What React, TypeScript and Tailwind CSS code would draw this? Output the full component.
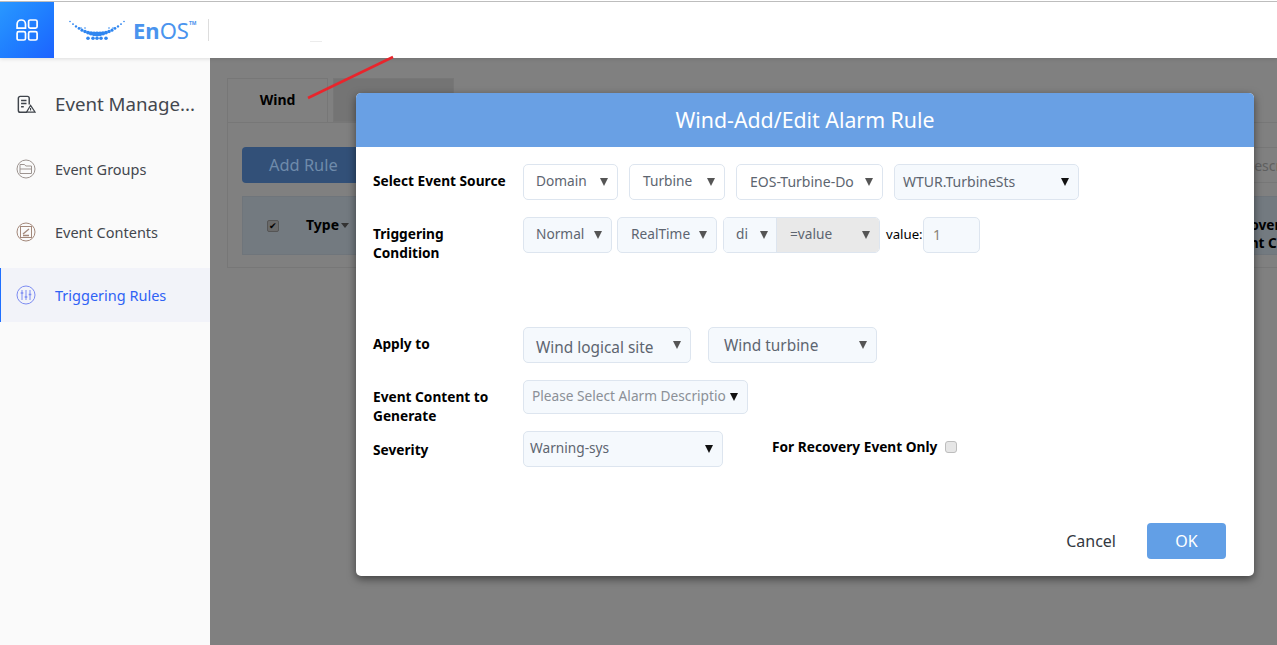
import type { ReactNode } from 'react'

const font = "font-['Noto_Sans',sans-serif]"

function Caret({ dark }: { dark?: boolean }) {
  return (
    <svg width="8" height="8" viewBox="0 0 8 8" className="shrink-0">
      <path d="M0 0h8L4 8z" fill={dark ? '#111' : '#555'} />
    </svg>
  )
}

type SelectProps = {
  label: string
  className: string
  textClass?: string
  dark?: boolean
}

function FakeSelect({ label, className, textClass = 'pb-[2px]', dark }: SelectProps) {
  return (
    <div className={`flex items-center justify-between rounded-[5px] border border-[#dde5ef] pr-[9px] ${className}`}>
      <span className={`whitespace-nowrap ${textClass}`}>{label}</span>
      <Caret dark={dark} />
    </div>
  )
}

function FieldRow({ label, className, children }: { label: ReactNode; className: string; children: ReactNode }) {
  return (
    <div className={`flex ${className}`}>
      <div className="w-[150px] shrink-0 text-[13.7px] font-bold leading-[19px] text-black">{label}</div>
      {children}
    </div>
  )
}

function LogoDots() {
  const main = Array.from({ length: 19 }, (_, i) => {
    const t = i / 18
    const d = Math.abs(t - 0.5) * 2
    return { x: 1 + t * 54, y: 1.5 + 12.5 * (1 - d * d), r: 0.8 + (1 - d) * 1.7 }
  })
  const lower = [19, 24, 28, 32, 37].map((x) => ({ x, y: 18.2, r: 1.8 }))
  const upper = [12, 16, 40, 44].map((x) => ({ x, y: 8, r: 0.8 }))
  return (
    <svg width="56" height="21" viewBox="0 0 56 21">
      <g fill="#2f86f0">
        {[...main, ...lower, ...upper].map((dot, i) => (
          <circle key={i} cx={dot.x} cy={dot.y} r={dot.r} />
        ))}
      </g>
    </svg>
  )
}

function SideItem({ icon, label, active }: { icon: ReactNode; label: string; active?: boolean }) {
  return (
    <div
      className={`flex h-[54px] items-center border-l pl-[15px] text-[14.5px] ${
        active ? 'border-[#1f6fff] bg-[#f2f3f9] text-[#2f62f5]' : 'border-transparent text-[#43474e]'
      }`}
    >
      <span className="mr-[19px] flex w-[20px] justify-center">{icon}</span>
      <span className="pt-[2px]">{label}</span>
    </div>
  )
}

export default function App() {
  return (
    <div className={`relative h-[645px] w-[1277px] overflow-hidden bg-[#808080] ${font}`}>
      {/* top bar */}
      <header className="relative z-10 h-[58px] bg-white shadow-[0_1px_4px_rgba(0,0,0,0.12)]">
        <div className="h-px" />
        <div className="h-px bg-[#bdbdbd]" />
        <div className="flex h-[56px] items-stretch">
          <div className="flex w-[54px] items-center justify-center bg-gradient-to-br from-[#2a98ff] to-[#1e62ff]">
            <svg width="22" height="22" viewBox="0 0 22 22" fill="none" stroke="#fff" strokeWidth="1.7">
              <path d="M5.3 1c2.4 0 4.2 1.8 4.2 4.2v3.9H1.1V5.2C1.1 2.8 2.9 1 5.3 1z" />
              <rect x="12.6" y="1" width="8.5" height="8.1" rx="1.6" />
              <rect x="1.1" y="12.6" width="8.4" height="8.4" rx="1.6" />
              <rect x="12.6" y="12.6" width="8.5" height="8.4" rx="1.6" />
            </svg>
          </div>
          <div className="ml-[15px] flex items-center">
            <LogoDots />
            <span className="ml-[8px] text-[22px] leading-none font-bold text-[#4a94ee]">En</span>
            <span className="text-[22px] leading-none text-[#4a94ee]">OS</span>
            <span className="mb-[13px] text-[5px] leading-none font-bold text-[#4a94ee]">TM</span>
            <span className="ml-[11px] h-[22px] w-px bg-[#dddddd]" />
          </div>
        </div>
        <span className="absolute top-[41px] left-[310px] h-px w-[12px] bg-[#ececec]" />
      </header>

      <div className="flex h-[587px]">
        {/* sidebar */}
        <aside className="w-[210px] shrink-0 bg-[#fafafa]">
          <div className="flex h-[84px] items-center pt-[8px] pl-[16px] text-[18.7px] leading-[28px] whitespace-nowrap text-[#43474e]">
            <span className="mr-[18px] flex w-[21px] justify-center">
              <svg width="19" height="19" viewBox="0 0 21 20" fill="none" stroke="#3f444b" strokeWidth="1.6">
                <path d="M11 18.5H3.5A2 2 0 0 1 1.5 16.5V3A2 2 0 0 1 3.5 1h8A2 2 0 0 1 13.5 3v7" />
                <path d="M4.5 5.5h6M4.5 9h6M4.5 12.5h3" />
                <path d="M15 11l5 7.5H10.5z" strokeWidth="1.3" />
                <path d="M15 14v2.5" strokeWidth="1.2" />
              </svg>
            </span>
            Event Manage...
          </div>
          <div className="flex flex-col gap-[9px]">
            <SideItem
              label="Event Groups"
              icon={
                <svg width="20" height="20" viewBox="0 0 20 20" fill="none" stroke="#9d9490" strokeWidth="1">
                  <circle cx="10" cy="10" r="9" />
                  <path d="M4 14.5V5.5h4.5l1.3 1.5h5.7v7.5z" />
                  <path d="M4 10h11.5" />
                </svg>
              }
            />
            <SideItem
              label="Event Contents"
              icon={
                <svg width="20" height="20" viewBox="0 0 20 20" fill="none" stroke="#a3887a" strokeWidth="1">
                  <circle cx="10" cy="10" r="9" />
                  <rect x="4.5" y="4.5" width="11" height="11" />
                  <path d="M7 12l6-5M7 13.5h6" strokeWidth="1.3" />
                </svg>
              }
            />
            <SideItem
              active
              label="Triggering Rules"
              icon={
                <svg width="20" height="20" viewBox="0 0 20 20" fill="none" stroke="#7d8cf2" strokeWidth="1">
                  <circle cx="10" cy="10" r="9" />
                  <path d="M6 5v10M10 5v10M14 5v10" />
                  <path d="M4.7 8h2.6M8.7 12h2.6M12.7 9.5h2.6" strokeWidth="1.5" />
                </svg>
              }
            />
          </div>
        </aside>

        {/* page behind the overlay */}
        <main className="min-w-0 flex-1 pt-[20px] pl-[17px]">
          <div className="flex h-[44px] items-stretch">
            <div className="w-[101px] border border-b-0 border-[#777] pt-[10px] text-center text-[14px] font-bold text-black">Wind</div>
            <div className="ml-[5px] w-[121px] border border-[#777] bg-[#747474]" />
          </div>
          <div className="h-[146px] w-[1100px] border border-[#777] px-[14px] pt-[24px]">
            <div className="flex items-center justify-between">
              <div className="flex h-[36px] w-[200px] items-center rounded-[4px] bg-[#325078] pl-[27px] text-[16.4px] text-[#6f8bab]">Add Rule</div>
              <div className="flex h-[36px] w-[80px] items-center border-y border-[#777] pl-[12px] text-[14px] text-[#5f5f5f]">Description</div>
            </div>
            <div className="mt-[13px] flex h-[59px] items-center border border-[#6f757b] bg-[#737a80] pl-[24px]">
              <span className="flex h-[12px] w-[12px] items-center justify-center rounded-[2px] border border-[#555] bg-[#6a6a6a] text-[9px] leading-none text-black">✔</span>
              <span className="ml-[27px] pb-[2px] text-[14px] font-bold text-black">Type</span>
              <svg width="8" height="5" viewBox="0 0 8 5" className="ml-[2px]">
                <path d="M0 0h8L4 5z" fill="#333" />
              </svg>
              <div className="mt-[16px] ml-auto w-[85px] shrink-0 text-[13.7px] leading-[18px] font-bold whitespace-nowrap text-black">
                Recovery
                <br />
                Event Content
              </div>
            </div>
          </div>
        </main>
      </div>

      {/* annotation arrow */}
      <svg width="90" height="46" viewBox="0 0 90 46" className="absolute top-[55px] left-[306px] z-10">
        <path d="M2 43L87 2" stroke="#e8252c" strokeWidth="2.5" />
      </svg>

      {/* modal */}
      <div className="absolute top-[93px] left-[356px] z-20 h-[483px] w-[898px] overflow-hidden rounded-[5px] bg-white shadow-[0_3px_9px_rgba(0,0,0,0.5)]">
        <div className="flex h-[54px] items-center justify-center bg-[#69a0e4] text-[21.3px] text-white">Wind-Add/Edit Alarm Rule</div>
        <div className="px-[17px] pt-[17px] text-[13.7px] text-[#5d6570]">
          <FieldRow label="Select Event Source" className="h-[36px] pt-[7px]">
            <div className="-mt-[7px] flex gap-[11px]">
              <FakeSelect label="Domain" className="h-[36px] w-[95px] pl-[12px]" />
              <FakeSelect label="Turbine" className="h-[36px] w-[96px] pl-[13px]" />
              <FakeSelect label="EOS-Turbine-Do" className="h-[36px] w-[147px] pl-[13px] text-[14px]" />
              <FakeSelect label="WTUR.TurbineSts" dark className="h-[36px] w-[185px] bg-[#f5f9fd] pl-[8px] text-[14px]" />
            </div>
          </FieldRow>

          <FieldRow label={<>Triggering<br />Condition</>} className="mt-[17px] h-[36px] pt-[7px]">
            <div className="-mt-[7px] flex items-center">
              <FakeSelect label="Normal" className="h-[36px] w-[89px] bg-[#f5f9fd] pl-[12px]" />
              <FakeSelect label="RealTime" className="ml-[5px] h-[36px] w-[100px] bg-[#f5f9fd] pl-[13px]" />
              <div className="ml-[6px] flex h-[36px] w-[157px] overflow-hidden rounded-[5px] border border-[#dde5ef]">
                <div className="flex w-[52px] items-center justify-between bg-[#f5f9fd] pr-[8px] pl-[12px]">
                  <span className="pb-[2px]">di</span>
                  <Caret />
                </div>
                <div className="flex flex-1 items-center justify-between border-l border-[#dde5ef] bg-[#e9e9e9] pr-[9px] pl-[13px]">
                  <span className="pb-[2px]">=value</span>
                  <Caret />
                </div>
              </div>
              <span className="ml-[6px] w-[37px] text-[13.2px] text-black">value:</span>
              <div className="flex h-[36px] w-[57px] items-center rounded-[5px] border border-[#dde5ef] bg-[#f5f9fd] pb-[1px] pl-[9px] text-[14px] text-[#8a8378]">1</div>
            </div>
          </FieldRow>

          <FieldRow label="Apply to" className="mt-[74px] h-[36px] pt-[7px]">
            <div className="-mt-[7px] flex gap-[17px] text-[15.4px]">
              <FakeSelect label="Wind logical site" textClass="pt-[5px]" className="h-[36px] w-[168px] bg-[#f5f9fd] pl-[12px]" />
              <FakeSelect label="Wind turbine" textClass="pt-[2px]" className="h-[36px] w-[169px] bg-[#f5f9fd] pl-[15px]" />
            </div>
          </FieldRow>

          <FieldRow label={<>Event Content to<br />Generate</>} className="mt-[17px] h-[34px] pt-[7px]">
            <FakeSelect label="Please Select Alarm Descriptio" dark className="-mt-[7px] h-[34px] w-[225px] bg-[#f5f9fd] pl-[8px] text-[13.7px] text-[#8b9097]" />
          </FieldRow>

          <FieldRow label="Severity" className="mt-[17px] h-[36px] pt-[9px]">
            <FakeSelect label="Warning-sys" dark className="-mt-[9px] h-[36px] w-[200px] bg-[#f5f9fd] pl-[6px]" />
            <div className="-mt-[9px] ml-[49px] flex h-[32px] items-center text-[13.7px] font-bold text-black">
              <span>For Recovery Event Only</span>
              <span className="ml-[8px] h-[12px] w-[12px] rounded-[3px] border border-[#bdbdbd] bg-[#e6e6e6]" />
            </div>
          </FieldRow>

          <div className="mt-[56px] flex items-center justify-end pr-[11px]">
            <span className="text-[16px] text-[#33393f]">Cancel</span>
            <div className="ml-[31px] flex h-[36px] w-[79px] items-center justify-center rounded-[4px] bg-[#629fe6] text-[16px] text-white">OK</div>
          </div>
        </div>
      </div>
    </div>
  )
}
